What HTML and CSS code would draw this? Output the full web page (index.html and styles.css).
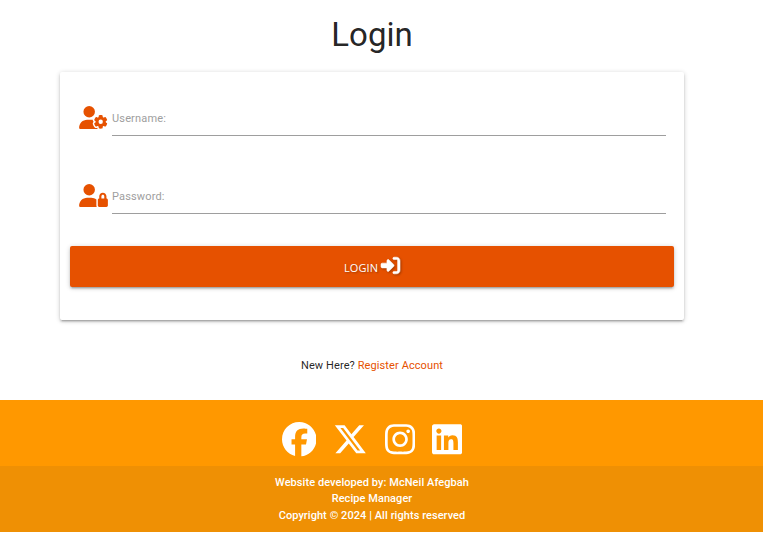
FILE: index.html
```html
<!DOCTYPE html>
<html lang="en">
<head>
<meta charset="utf-8">
<title>Login</title>
<link rel="stylesheet" href="styles.css">
</head>
<body>
<main>
  <h1>Login</h1>
  <form class="card">
    <div class="field">
      <svg class="prefix" viewBox="0 0 640 512"><path d="M224 0a128 128 0 1 1 0 256A128 128 0 1 1 224 0zM178.300 304h91.400c11.800 0 23.400 1.200 34.500 3.300c-2.100 18.500 7.400 35.600 21.800 44.800c-16.600 10.600-26.700 31.600-20 53.300c4 12.900 9.400 25.500 16.400 37.600s15.200 23.100 24.400 33c15.700 16.900 39.600 18.400 57.200 8.700v.9c0 9.200 2.700 18.500 7.900 26.300H29.700C13.300 512 0 498.700 0 482.300C0 383.800 79.800 304 178.300 304zM436 218.200c0-7 4.500-13.300 11.300-14.800c10.500-2.400 21.500-3.700 32.700-3.700s22.200 1.300 32.700 3.700c6.800 1.500 11.300 7.800 11.300 14.800v17.700c0 7.800 4.800 14.800 11.600 18.700c6.800 3.900 15.100 4.500 21.800 .6l13.800-7.900c6.100-3.500 13.700-2.700 18.500 2.400c7.600 8.100 14.300 17.200 20.100 27.200s10.300 20.400 13.500 31c2.100 6.700-1.100 13.700-7.200 17.200l-14.400 8.300c-6.500 3.700-10 10.900-10 18.400s3.500 14.700 10 18.400l14.400 8.300c6.100 3.500 9.200 10.500 7.200 17.200c-3.300 10.600-7.800 21-13.500 31s-12.500 19.100-20.100 27.200c-4.800 5.100-12.500 5.900-18.500 2.400l-13.800-7.900c-6.700-3.900-15.100-3.300-21.800 .6c-6.800 3.900-11.600 10.900-11.600 18.700v17.700c0 7-4.500 13.300-11.300 14.800c-10.500 2.400-21.500 3.700-32.700 3.700s-22.200-1.300-32.700-3.700c-6.800-1.500-11.300-7.800-11.300-14.800V467.800c0-7.900-4.900-14.900-11.700-18.900c-6.800-3.900-15.200-4.500-22-.6l-13.500 7.800c-6.100 3.500-13.700 2.700-18.500-2.400c-7.600-8.100-14.300-17.200-20.100-27.200s-10.300-20.400-13.500-31c-2.100-6.700 1.100-13.700 7.200-17.200l14-8.100c6.500-3.800 10.100-11.100 10.100-18.600s-3.500-14.800-10.100-18.600l-14-8.100c-6.100-3.500-9.200-10.500-7.200-17.200c3.300-10.600 7.700-21 13.500-31s12.500-19.100 20.100-27.200c4.800-5.100 12.400-5.900 18.500-2.400l13.600 7.800c6.800 3.900 15.200 3.300 22-.6c6.900-3.900 11.700-11 11.700-18.900V218.200zm92.100 133.500a48.100 48.100 0 1 0 -96.100 0 48.100 48.100 0 1 0 96.100 0z"/></svg>
      <label class="line">Username:</label>
    </div>
    <div class="field">
      <svg class="prefix" viewBox="0 0 640 512"><path d="M224 256A128 128 0 1 0 224 0a128 128 0 1 0 0 256zm-45.700 48C79.800 304 0 383.800 0 482.300C0 498.700 13.300 512 29.700 512H392.600c-5.400-9.400-8.600-20.300-8.600-32V352c0-2.100 .1-4.200 .3-6.300c-31-26-71-41.700-114.600-41.700H178.300zM528 240c17.700 0 32 14.300 32 32v48H496V272c0-17.700 14.300-32 32-32zm-80 32v48c-17.700 0-32 14.300-32 32V480c0 17.700 14.300 32 32 32H608c17.700 0 32-14.300 32-32V352c0-17.700-14.300-32-32-32V272c0-44.200-35.800-80-80-80s-80 35.800-80 80z"/></svg>
      <label class="line">Password:</label>
    </div>
    <button type="button" class="btn"><span>LOGIN</span><svg class="enter" viewBox="0 0 512 512"><path d="M217.900 105.900L340.700 228.700c7.200 7.200 11.300 17.100 11.300 27.300s-4.100 20.100-11.300 27.300L217.900 406.100c-6.400 6.400-15 9.900-24 9.900c-18.700 0-33.900-15.200-33.900-33.900V320H32c-17.700 0-32-14.300-32-32V224c0-17.700 14.300-32 32-32H160V129.900c0-18.700 15.200-33.900 33.900-33.900c9 0 17.600 3.600 24 9.900zM352 416h64c17.700 0 32-14.300 32-32V128c0-17.700-14.300-32-32-32H352c-17.700 0-32-14.300-32-32s14.300-32 32-32h64c53 0 96 43 96 96V384c0 53-43 96-96 96H352c-17.700 0-32-14.300-32-32s14.300-32 32-32z"/></svg></button>
  </form>
  <p class="register">New Here? <a href="#">Register Account</a></p>
</main>
<footer>
  <div class="social">
    <svg viewBox="0 0 512 512"><path d="M512 256C512 114.600 397.400 0 256 0S0 114.600 0 256C0 376 82.700 476.800 194.200 504.500V334.200H141.400V256h52.800V222.300c0-87.100 39.400-127.500 125-127.500c16.200 0 44.200 3.200 55.700 6.400V172c-6-.6-16.500-1-29.600-1c-42 0-58.200 15.900-58.200 57.200V256h83.600l-14.400 78.200H287V510.100C413.800 494.800 512 386.900 512 256z"/></svg>
    <svg viewBox="0 0 512 512"><path d="M389.200 48h70.600L305.600 224.200 487 464H345L233.700 318.600 106.500 464H35.800L200.700 275.500 26.800 48H172.400L272.900 180.900 389.200 48zM364.400 421.800h39.100L151.100 88h-42L364.400 421.800z"/></svg>
    <svg class="narrow" viewBox="0 0 448 512"><path d="M224.100 141c-63.600 0-114.900 51.300-114.900 114.900s51.300 114.900 114.900 114.900S339 319.500 339 255.900 287.700 141 224.100 141zm0 189.600c-41.100 0-74.700-33.500-74.700-74.700s33.500-74.700 74.700-74.700 74.700 33.500 74.700 74.700-33.600 74.700-74.700 74.700zm146.400-194.300c0 14.900-12 26.800-26.800 26.800-14.900 0-26.800-12-26.800-26.800s12-26.800 26.800-26.800 26.800 12 26.800 26.800zm76.100 27.200c-1.700-35.900-9.900-67.700-36.200-93.900-26.200-26.200-58-34.400-93.900-36.200-37-2.100-147.900-2.100-184.900 0-35.800 1.700-67.600 9.900-93.900 36.100s-34.400 58-36.200 93.900c-2.100 37-2.100 147.900 0 184.900 1.700 35.900 9.900 67.700 36.200 93.900s58 34.400 93.900 36.200c37 2.100 147.900 2.100 184.900 0 35.900-1.700 67.700-9.900 93.900-36.200 26.200-26.200 34.400-58 36.200-93.900 2.100-37 2.100-147.800 0-184.800zM398.800 388c-7.800 19.600-22.900 34.700-42.600 42.600-29.500 11.700-99.500 9-132.100 9s-102.700 2.600-132.100-9c-19.600-7.800-34.700-22.900-42.600-42.600-11.700-29.500-9-99.500-9-132.100s-2.600-102.700 9-132.100c7.800-19.600 22.900-34.700 42.600-42.600 29.500-11.700 99.500-9 132.100-9s102.700-2.600 132.100 9c19.600 7.800 34.700 22.900 42.600 42.600 11.700 29.500 9 99.500 9 132.100s2.700 102.700-9 132.100z"/></svg>
    <svg class="narrow" viewBox="0 0 448 512"><path d="M416 32H31.900C14.300 32 0 46.500 0 64.300v383.400C0 465.500 14.300 480 31.900 480H416c17.600 0 32-14.500 32-32.300V64.300c0-17.800-14.400-32.300-32-32.300zM135.400 416H69V202.200h66.500V416zm-33.200-243c-21.300 0-38.500-17.300-38.500-38.500S80.900 96 102.200 96c21.200 0 38.500 17.300 38.500 38.500 0 21.300-17.200 38.500-38.500 38.500zm282.100 243h-66.400V312c0-24.800-.5-56.700-34.500-56.700-34.600 0-39.900 27-39.900 54.900V416h-66.400V202.200h63.700v29.200h.9c8.900-16.800 30.600-34.500 62.900-34.500 67.200 0 79.700 44.300 79.700 101.900V416z"/></svg>
  </div>
  <div class="copyright">Website developed by: McNeil Afegbah<br>Recipe Manager<br>Copyright © 2024 | All rights reserved</div>
</footer>
</body>
</html>
```
FILE: styles.css
```css
* { box-sizing: border-box; }
body {
  margin: 0;
  background: #fff;
  color: rgba(0, 0, 0, .87);
  font: 11px/16.5px Roboto, sans-serif;
}
main {
  height: 400px;
  padding: 15px 79px 0 60px;
}
h1 {
  margin: 0 0 17px;
  text-align: center;
  font-size: 33px;
  line-height: 40px;
  font-weight: 400;
}
.card {
  height: 248px;
  padding: 18px 10px 0;
  border-radius: 2px;
  box-shadow: 0 2px 2px 0 rgba(0,0,0,.14), 0 3px 1px -2px rgba(0,0,0,.12), 0 1px 5px 0 rgba(0,0,0,.2);
}
.field {
  display: flex;
  height: 46px;
  margin: 0 8px 32px;
}
.prefix {
  width: 29px;
  height: 23px;
  margin: 16px 4.5px 0 .5px;
  fill: #e65100;
}
.line {
  flex: 1;
  padding-top: 21px;
  border-bottom: 1px solid #9e9e9e;
  color: #9e9e9e;
  letter-spacing: .16px;
}
.btn {
  display: flex;
  align-items: center;
  justify-content: center;
  gap: 3px;
  width: 100%;
  height: 41px;
  padding: 0;
  border: 0;
  border-radius: 2px;
  background: #e65100;
  box-shadow: 0 2px 2px 0 rgba(0,0,0,.14), 0 3px 1px -2px rgba(0,0,0,.12), 0 1px 5px 0 rgba(0,0,0,.2);
  color: #fff;
  font: 11px/16px "Open Sans", sans-serif;
  letter-spacing: .1px;
  text-shadow: 1px 1px 2px rgba(0,0,0,.3);
}
.btn span { padding-top: 3px; }
.enter {
  width: 19px;
  height: 19px;
  margin-bottom: 2px;
  overflow: visible;
  fill: #fff;
  stroke: #fff;
  stroke-width: 16;
  filter: drop-shadow(1px 1px 1px rgba(0,0,0,.3));
}
.register {
  margin: 38px 0 0;
  text-align: center;
  letter-spacing: .1px;
}
.register a { color: #e65100; text-decoration: none; }
footer { height: 132px; background: #ff9800; color: #fff; }
.social {
  display: flex;
  justify-content: center;
  gap: 17px;
  height: 66px;
  padding: 22px 19px 0 0;
}
.social svg { width: 34.5px; height: 34.5px; fill: #fff; }
.social .narrow { width: 30.2px; }
.copyright {
  height: 66px;
  padding: 8.5px 19px 0 0;
  background: rgba(51, 51, 51, .08);
  text-align: center;
  font-weight: 500;
  letter-spacing: .06px;
}
```
